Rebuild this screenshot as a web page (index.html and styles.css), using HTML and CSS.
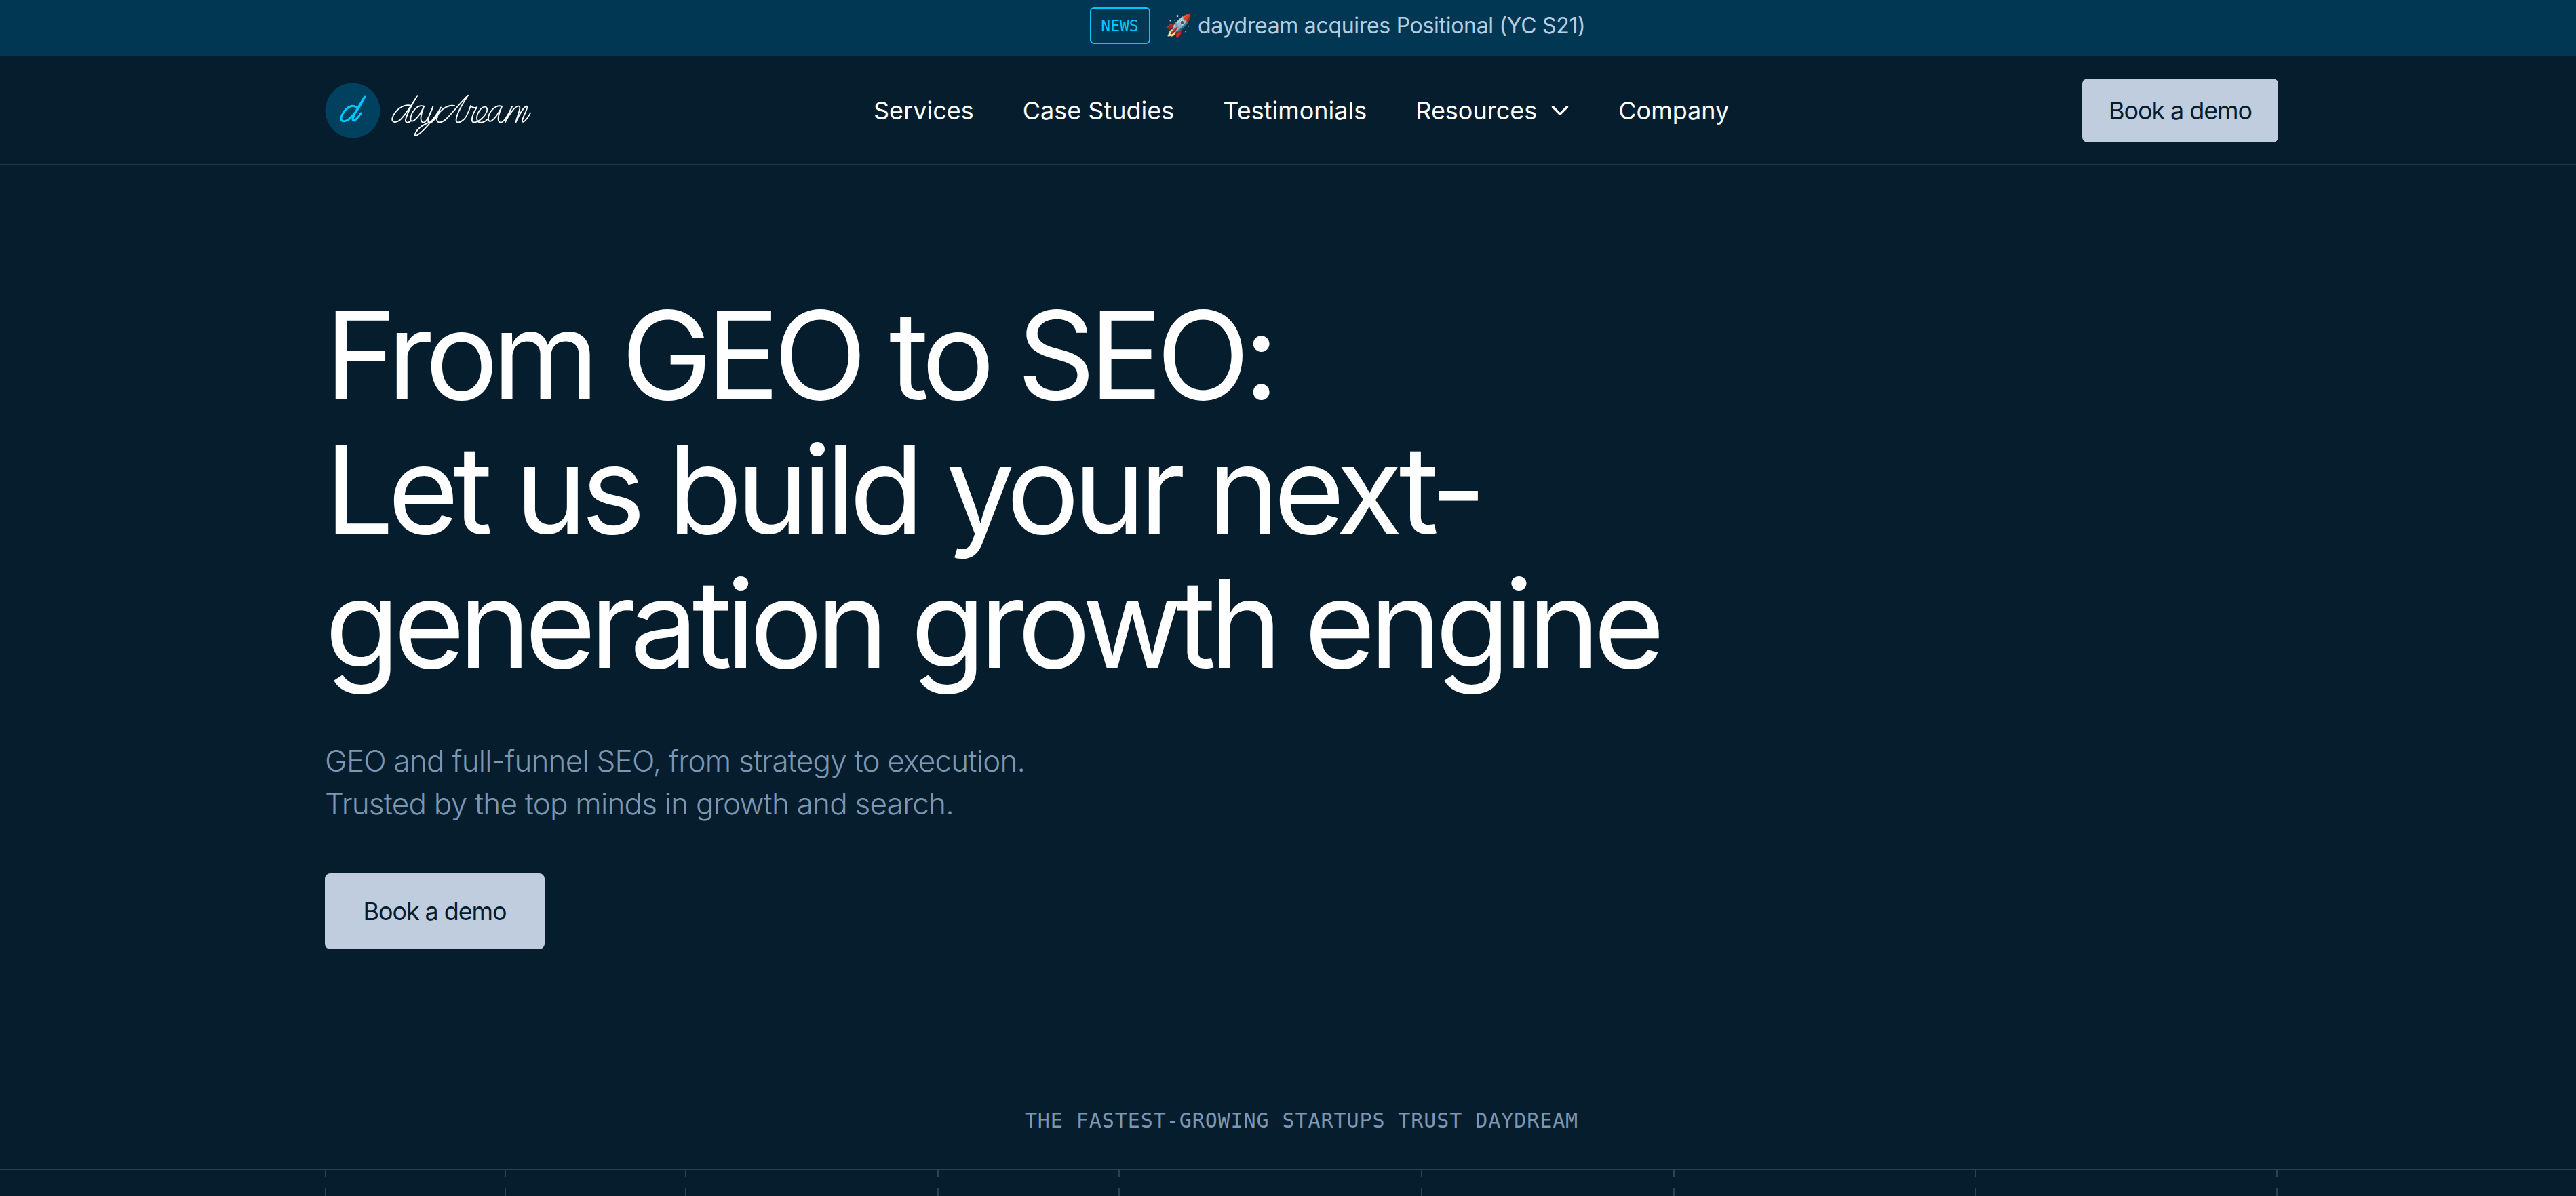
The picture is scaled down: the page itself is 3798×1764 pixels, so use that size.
FILE: index.html
```html
<!DOCTYPE html>
<html lang="en">
<head>
<meta charset="utf-8">
<title>daydream</title>
<link rel="stylesheet" href="styles.css">
</head>
<body>
<div class="page">
  <div class="announce">
    <span class="news">NEWS</span>
    <span class="announce-text">🚀 daydream acquires Positional (YC S21)</span>
  </div>
  <header class="nav">
    <div class="nav-inner">
      <a class="logo" aria-label="daydream">
        <svg class="logo-mark" viewBox="0 0 82 82"><circle cx="41" cy="41" r="40.5" fill="#02405f"/><path d="M46 36C38 30 26 42 24 52C23 58 30 58 35 54C44 47 53 33 59 20C52 32 41 48 41 54C41 58 46 56 53 45" fill="none" stroke="#00c8ff" stroke-width="3" stroke-linecap="round" stroke-linejoin="round"/></svg>
        <svg class="logo-word" viewBox="0 0 660 240"><path d="M104 76C72 70 36 100 26 130C20 152 40 156 58 142C84 120 118 62 136 34C110 74 88 120 84 140C82 156 98 154 108 144M165 80C135 70 108 108 106 136C105 158 135 145 165 82C150 120 145 150 163 152C180 150 195 110 205 82C188 120 175 150 190 155C205 155 225 115 240 85C210 140 150 205 130 210C118 212 130 180 170 160C190 150 210 145 226 128M300 78C265 72 225 105 222 135C220 158 245 155 265 135C295 105 335 55 360 32C335 70 310 115 308 138C306 158 325 155 345 135C358 120 366 95 372 78C380 88 392 88 400 84C386 105 376 130 378 145C382 158 405 150 420 135C440 118 452 95 440 84C420 76 395 115 400 140C404 158 430 155 448 136M508 80C480 72 450 108 450 135C450 158 475 150 510 82C495 115 485 150 505 152C525 150 545 100 555 82C545 105 530 135 525 150C545 110 570 78 585 80C598 82 575 130 572 150C590 110 610 80 620 80C630 82 600 130 600 145C602 158 620 140 636 110" fill="none" stroke="#fff" stroke-width="5.5" stroke-linecap="round" stroke-linejoin="round"/></svg>
      </a>
      <nav class="links">
        <a>Services</a>
        <a>Case Studies</a>
        <a>Testimonials</a>
        <a class="has-caret">Resources
          <svg class="caret" viewBox="4 4 16 16"><path d="M6 9l6 6 6-6" fill="none" stroke="#fff" stroke-width="2" stroke-linecap="round" stroke-linejoin="round"/></svg>
        </a>
        <a>Company</a>
      </nav>
      <a class="btn btn-nav">Book a demo</a>
    </div>
  </header>
  <main class="hero">
    <h1>From GEO to SEO:<br>Let us build your next-<br>generation growth engine</h1>
    <p class="sub">GEO and full-funnel SEO, from strategy to execution.<br>Trusted by the top minds in growth and search.</p>
    <a class="btn btn-hero">Book a demo</a>
  </main>
  <section class="trust">
    <p class="trust-title">THE FASTEST-GROWING STARTUPS TRUST DAYDREAM</p>
    <div class="grid">
      <i style="width:265px"></i><i style="width:266px"></i><i style="width:372px"></i><i style="width:267px"></i><i style="width:446px"></i><i style="width:372px"></i><i style="width:445px"></i><i style="width:444px"></i><i style="width:2px"></i>
    </div>
  </section>
</div>
</body>
</html>
```
FILE: styles.css
```css
* { box-sizing: border-box; }
html, body { margin: 0; height: 100%; background: #051d2c; overflow: hidden; }
body { font-family: Inter, "Liberation Sans", sans-serif; color: #fff; }
.page { width: 3838px; height: 1764px; display: flex; flex-direction: column; }
.announce { width: 3798px; height: 83px; background: #023754; display: flex; align-items: center; justify-content: center; gap: 22px; padding-left: 146px; padding-bottom: 8px; }
.news { font-family: "DejaVu Sans Mono", monospace; font-size: 23px; color: #00c8ff; border: 2px solid #00c8ff; border-radius: 6px; width: 89px; height: 54px; display: flex; align-items: center; justify-content: center; }
.announce-text { font-size: 32px; letter-spacing: -0.3px; color: #b5cde0; }
.nav { height: 161px; border-bottom: 2px solid #1f3a50; width: 3798px; }
.nav-inner { width: 2880px; margin-left: 479px; height: 100%; display: flex; align-items: center; }
.logo { display: flex; align-items: center; gap: 9px; }
.logo-mark { width: 82px; height: 82px; display: block; }
.logo-word { width: 220px; height: 80px; display: block; margin-top: 14px; }
.links { display: flex; align-items: center; gap: 72px; margin-left: 498px; font-size: 36px; }
.has-caret { display: flex; align-items: center; gap: 20px; }
.caret { width: 28px; height: 28px; }
.btn { background: #bfcddf; color: #051c2c; border-radius: 8px; display: flex; align-items: center; justify-content: center; font-size: 36px; letter-spacing: -1.1px; }
.btn-nav { width: 289px; height: 94px; margin-left: auto; }
.hero { width: 2880px; margin-left: 479px; padding-top: 181px; }
h1 { margin: 0; font-size: 180px; line-height: 198px; font-weight: 400; letter-spacing: -9px; }
.sub { margin: 72px 0 0; font-size: 44px; line-height: 63px; font-weight: 300; letter-spacing: -0.78px; color: #7d97b3; }
.btn-hero { width: 324px; height: 112px; margin-top: 71px; }
.trust { margin-top: auto; }
.trust-title { margin: 0 0 54px; width: 3838px; text-align: center; font-family: "DejaVu Sans Mono", monospace; font-size: 30px; letter-spacing: 0.92px; color: #7d97b3; }
.grid { width: 3798px; height: 40px; border-top: 2px solid #2a4258; padding-left: 479px; display: flex; }
.grid i { display: block; height: 38px; background: linear-gradient(#2a4258, #2a4258) left top / 2px 10px no-repeat, linear-gradient(#2a4258, #2a4258) left bottom / 2px 12px no-repeat; }
```
